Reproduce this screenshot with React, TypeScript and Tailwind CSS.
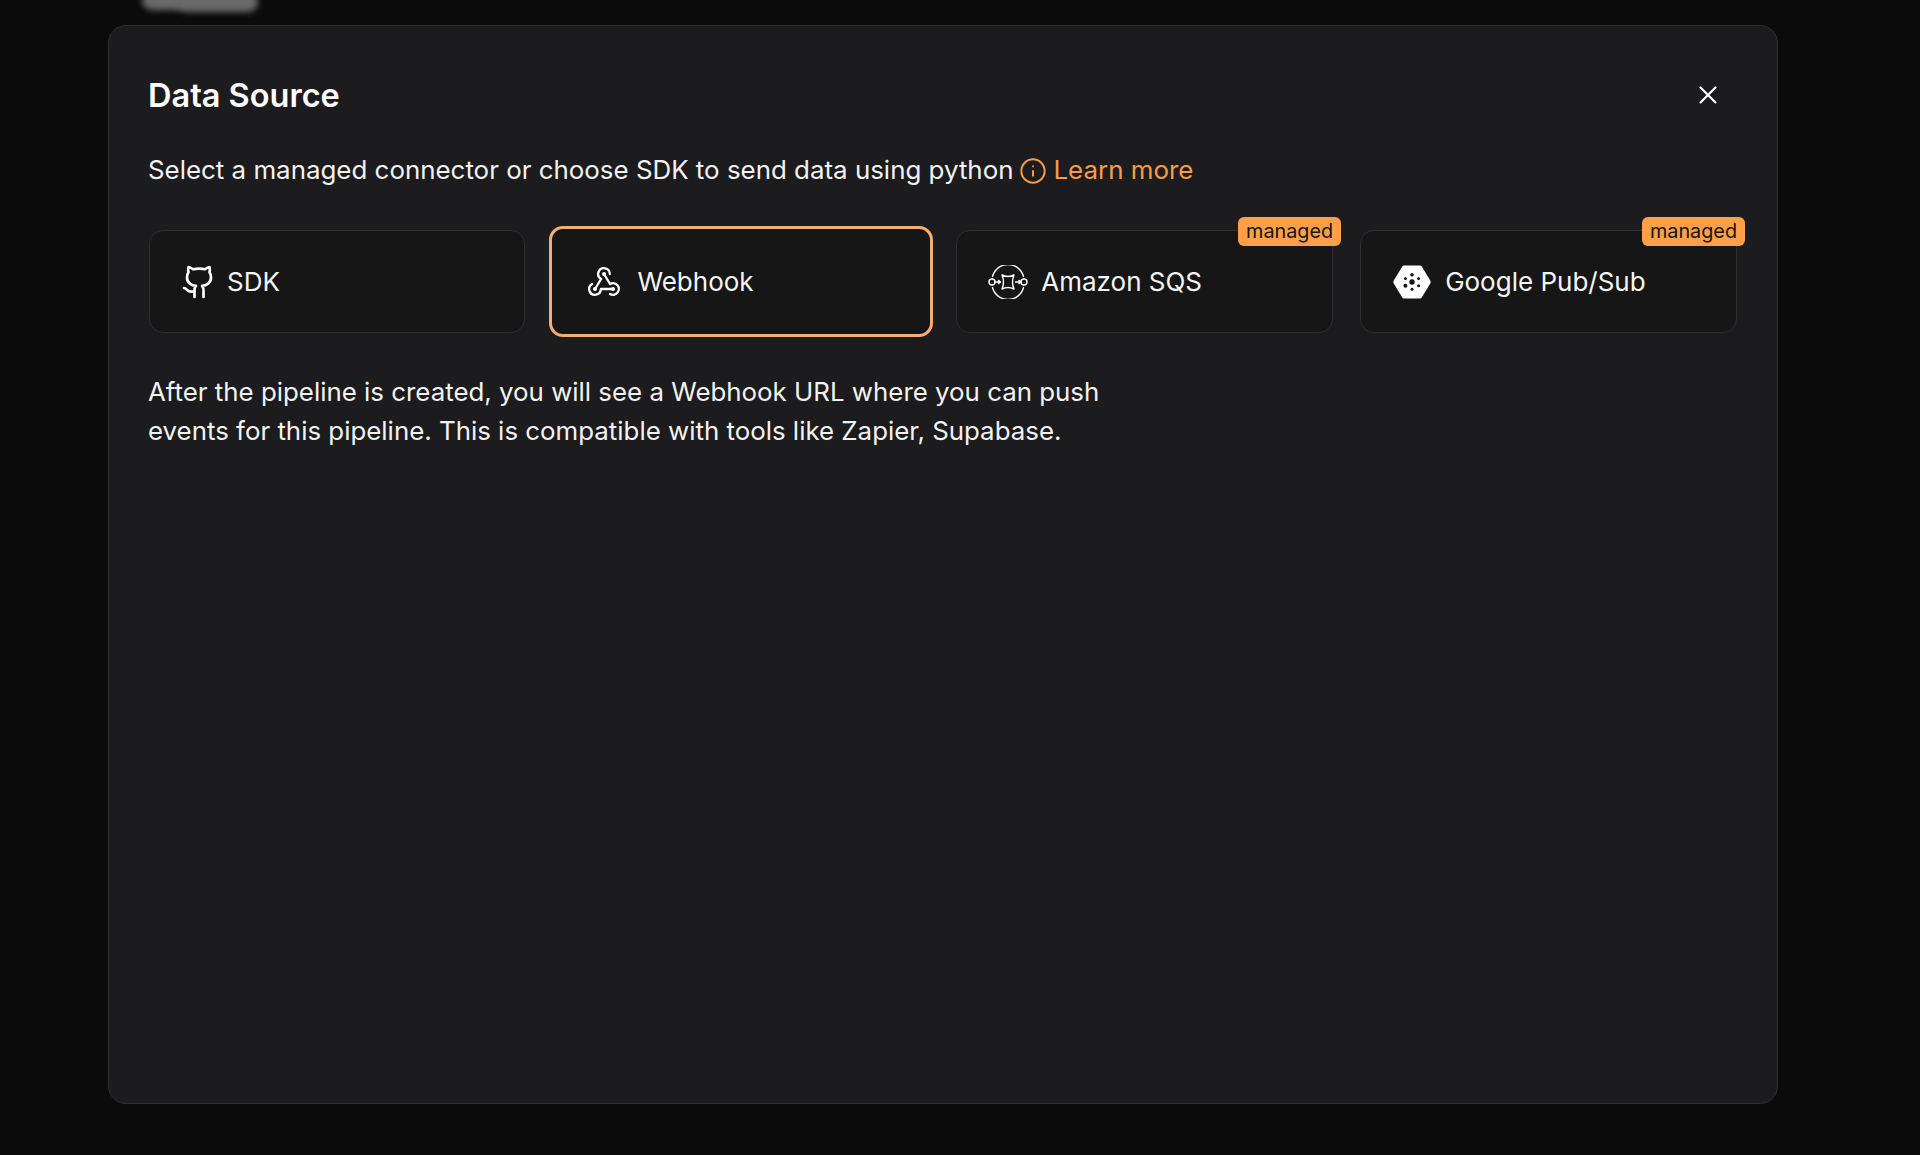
import { Github, Info, X } from "lucide-react";

function WebhookIcon() {
  return (
    <svg width="32" height="30" viewBox="0 0 32 30" fill="none" stroke="#fff" strokeWidth="2.3" strokeLinecap="round" strokeLinejoin="round">
      <path d="M21.8 7A5.8 5.8 0 1 0 13.1 12L7 22" />
      <path d="M4.1 17A5.8 5.8 0 1 0 12.8 22H25" />
      <path d="M22 27A5.8 5.8 0 1 0 22.1 17L16 7" />
      <circle cx="7" cy="22" r="2.1" fill="#fff" stroke="none" />
      <circle cx="25" cy="22" r="2.1" fill="#fff" stroke="none" />
      <circle cx="16" cy="7" r="2.1" fill="#fff" stroke="none" />
    </svg>
  );
}

function SqsIcon() {
  return (
    <svg width="40" height="34" viewBox="0 0 40 34" fill="none" stroke="#fff" strokeWidth="1.4" strokeLinecap="round" strokeLinejoin="round">
      <path d="M4.5 11.5A16 16 0 0 1 35.5 11.5" />
      <path d="M4.5 22.5A16 16 0 0 0 35.5 22.5" />
      <circle cx="4" cy="17" r="3" />
      <circle cx="36" cy="17" r="3" />
      <path d="M7.5 17H12M10.5 15.4L12.5 17L10.5 18.6" />
      <path d="M27.5 17H32.5M31 15.4L33 17L31 18.6" />
      <path d="M14 10Q20 13 26 10Q23 17 26 24Q20 21 14 24Q17 17 14 10Z" />
    </svg>
  );
}

function PubSubIcon() {
  return (
    <svg width="38" height="34" viewBox="0 0 38 34">
      <path d="M9.5 1.2Q10 0.5 11 0.5H27Q28 0.5 28.6 1.3L37.4 15.8Q38 17 37.4 18.2L28.6 32.7Q28 33.5 27 33.5H11Q10 33.5 9.4 32.7L0.6 18.2Q0 17 0.6 15.8Z" fill="#fff" />
      <g fill="#161617">
        <circle cx="19" cy="17" r="2.7" />
        <circle cx="19" cy="9.8" r="1.8" />
        <circle cx="19" cy="24.3" r="1.5" />
        <circle cx="12.4" cy="13.4" r="1.5" />
        <circle cx="25.6" cy="13.4" r="1.5" />
        <circle cx="12.4" cy="20.8" r="2" />
        <circle cx="25.6" cy="20.8" r="1.5" />
      </g>
    </svg>
  );
}

function Badge() {
  return (
    <span className="absolute -top-[14px] -right-[9px] flex h-[29px] items-center rounded-[6px] bg-[#ff9f47] px-[8px] text-[19.8px] font-normal text-[#141414]">
      managed
    </span>
  );
}

export default function App() {
  const font = { fontFamily: "Inter, 'Noto Sans', sans-serif" };
  return (
    <div style={font} className="relative h-[1155px] overflow-hidden bg-[#0b0b0b] pl-[108px] pt-[25px]">
      <div className="absolute left-[142px] -top-[10px] h-[20px] w-[44px] rounded-full bg-[#6a6a6a] blur-[3px]" />
      <div className="absolute left-[176px] -top-[8px] h-[20px] w-[82px] rounded-full bg-[#6a6a6a] blur-[3px]" />
      <div className="h-[1079px] w-[1670px] rounded-[18px] border border-[#303032] bg-[#1c1c1e] pl-[39px] pr-10 pt-[35px]">
        <div className="flex h-[68px] items-center justify-between">
          <h1 className="mt-[2px] text-[32.5px] font-semibold text-white">Data Source</h1>
          <X size={30} strokeWidth={1.7} color="#fff" className="mr-[14px]" />
        </div>
        <div className="mt-[22px] flex h-[39px] items-center text-[25.9px] font-normal text-[#f2f2f2]">
          <span>Select a managed connector or choose SDK to send data using python</span>
          <Info size={28} strokeWidth={1.7} color="#f79c47" className="ml-[6px]" />
          <span className="ml-[6px] text-[#f79c47]">Learn more</span>
        </div>
        <div className="ml-[0.5px] mt-[40px] grid grid-cols-4 gap-x-[27px]">
          <div className="flex h-[103px] items-center rounded-[14px] border border-[#2f2f31] bg-[#161617] pl-[31px] text-[26px] text-[#f5f5f5]">
            <Github size={36} strokeWidth={1.8} color="#fff" />
            <span className="ml-[10.5px]">SDK</span>
          </div>
          <div className="-my-1 ml-[-3px] mr-[-4px] flex h-[111px] items-center rounded-[14px] border-[3px] border-[#f4ae72] bg-[#161617] pl-[36px] text-[26px] text-[#f5f5f5]">
            <WebhookIcon />
            <span className="ml-[17px]">Webhook</span>
          </div>
          <div className="relative flex h-[103px] items-center rounded-[14px] border border-[#2f2f31] bg-[#161617] pl-[31px] text-[26px] text-[#f5f5f5]">
            <SqsIcon />
            <span className="ml-[13px]">Amazon SQS</span>
            <Badge />
          </div>
          <div className="relative flex h-[103px] items-center rounded-[14px] border border-[#2f2f31] bg-[#161617] pl-[32px] text-[26px] text-[#f5f5f5]">
            <PubSubIcon />
            <span className="ml-[14px]">Google Pub/Sub</span>
            <Badge />
          </div>
        </div>
        <p className="mt-[39px] w-[1000px] text-[25.86px] leading-[39px] text-[#f2f2f2]">
          After the pipeline is created, you will see a Webhook URL where you can push events for this pipeline. This is compatible with tools like Zapier, Supabase.
        </p>
      </div>
    </div>
  );
}
